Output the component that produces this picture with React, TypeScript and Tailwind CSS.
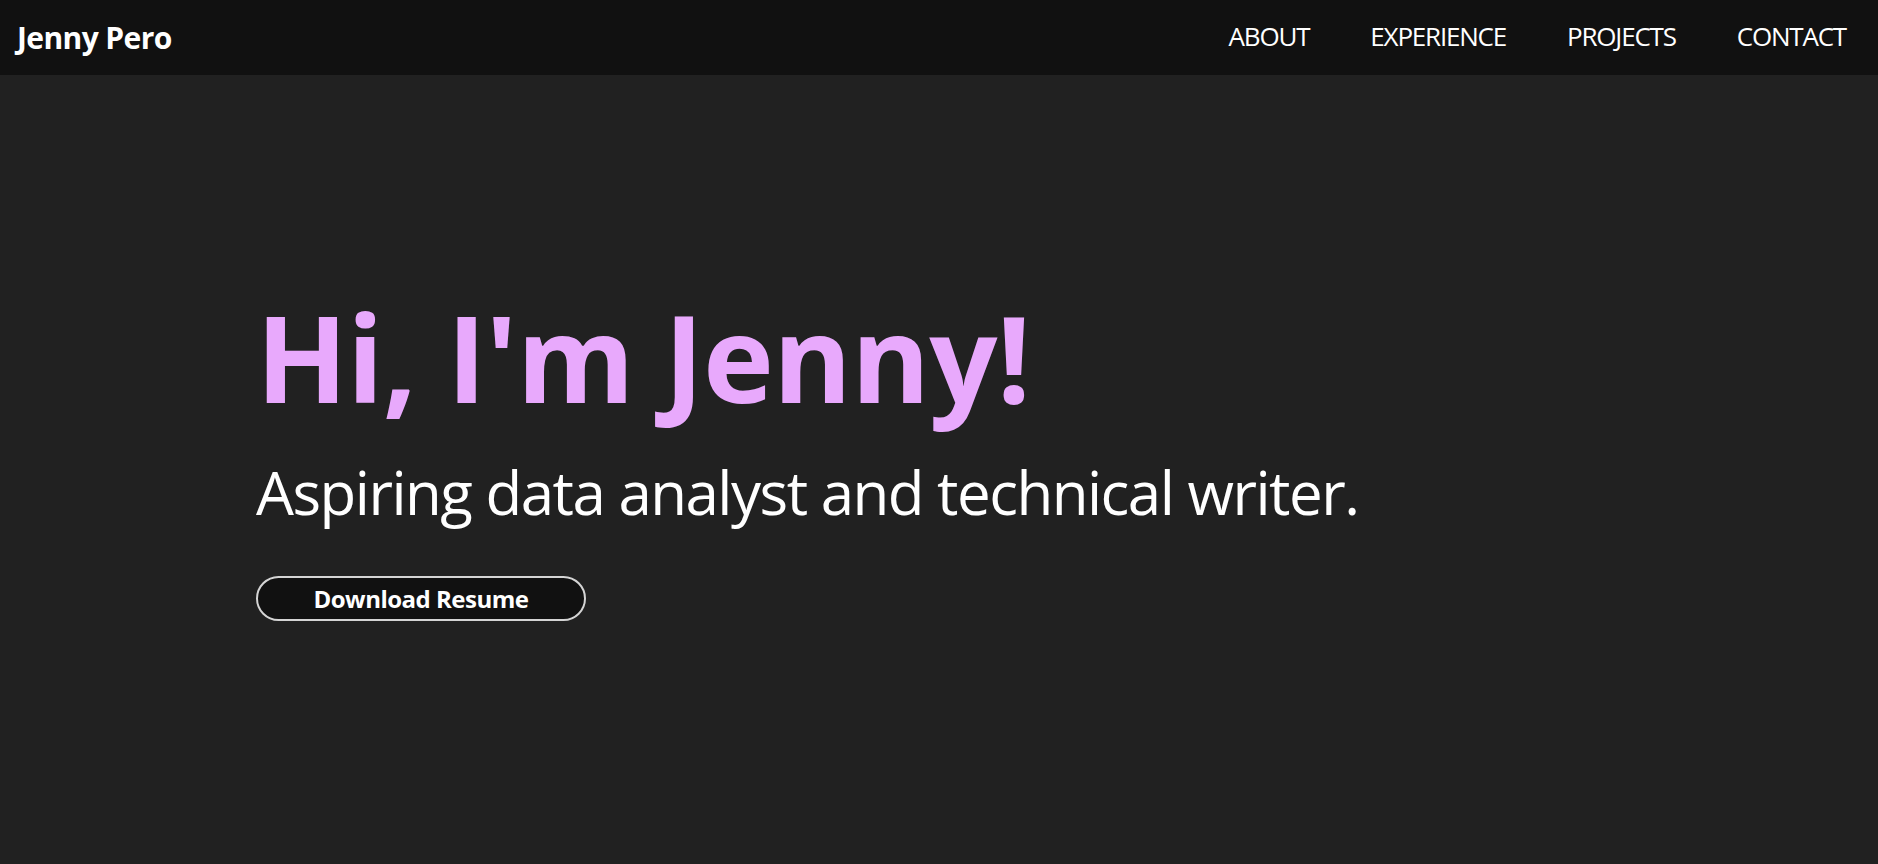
const links = ["ABOUT", "EXPERIENCE", "PROJECTS", "CONTACT"]

export default function App() {
  return (
    <div className="min-h-screen w-full bg-[#212121] text-white font-['Open_Sans',sans-serif]">
      {/* Nav */}
      <nav className="flex h-[75px] items-center justify-between bg-[#111111] pl-[17px] pr-[32px]">
        <a href="#" className="text-[30px] font-bold leading-none tracking-[-0.6px]">
          Jenny Pero
        </a>
        <ul className="flex items-center gap-[61px]">
          {links.map((l) => (
            <li key={l}>
              <a href="#" className="text-[26px] leading-none tracking-[-1.2px]">
                {l}
              </a>
            </li>
          ))}
        </ul>
      </nav>

      {/* Hero */}
      <main className="flex flex-col items-start pl-[256px] pt-[222px]">
        <h1 className="text-[120px] font-bold leading-[120px] tracking-[-0.8px] text-[#e8a9fc]">
          Hi, I'm Jenny!
        </h1>
        <p className="mt-[45px] text-[60px] leading-[60px] tracking-[-1.5px]">
          Aspiring data analyst and technical writer.
        </p>
        <button className="mt-[54px] flex h-[45px] w-[330px] items-center justify-center rounded-full border-2 border-[#d4d4d4] bg-[#111111] text-[24px] font-bold tracking-[-0.5px] text-white">
          Download Resume
        </button>
      </main>
    </div>
  )
}
